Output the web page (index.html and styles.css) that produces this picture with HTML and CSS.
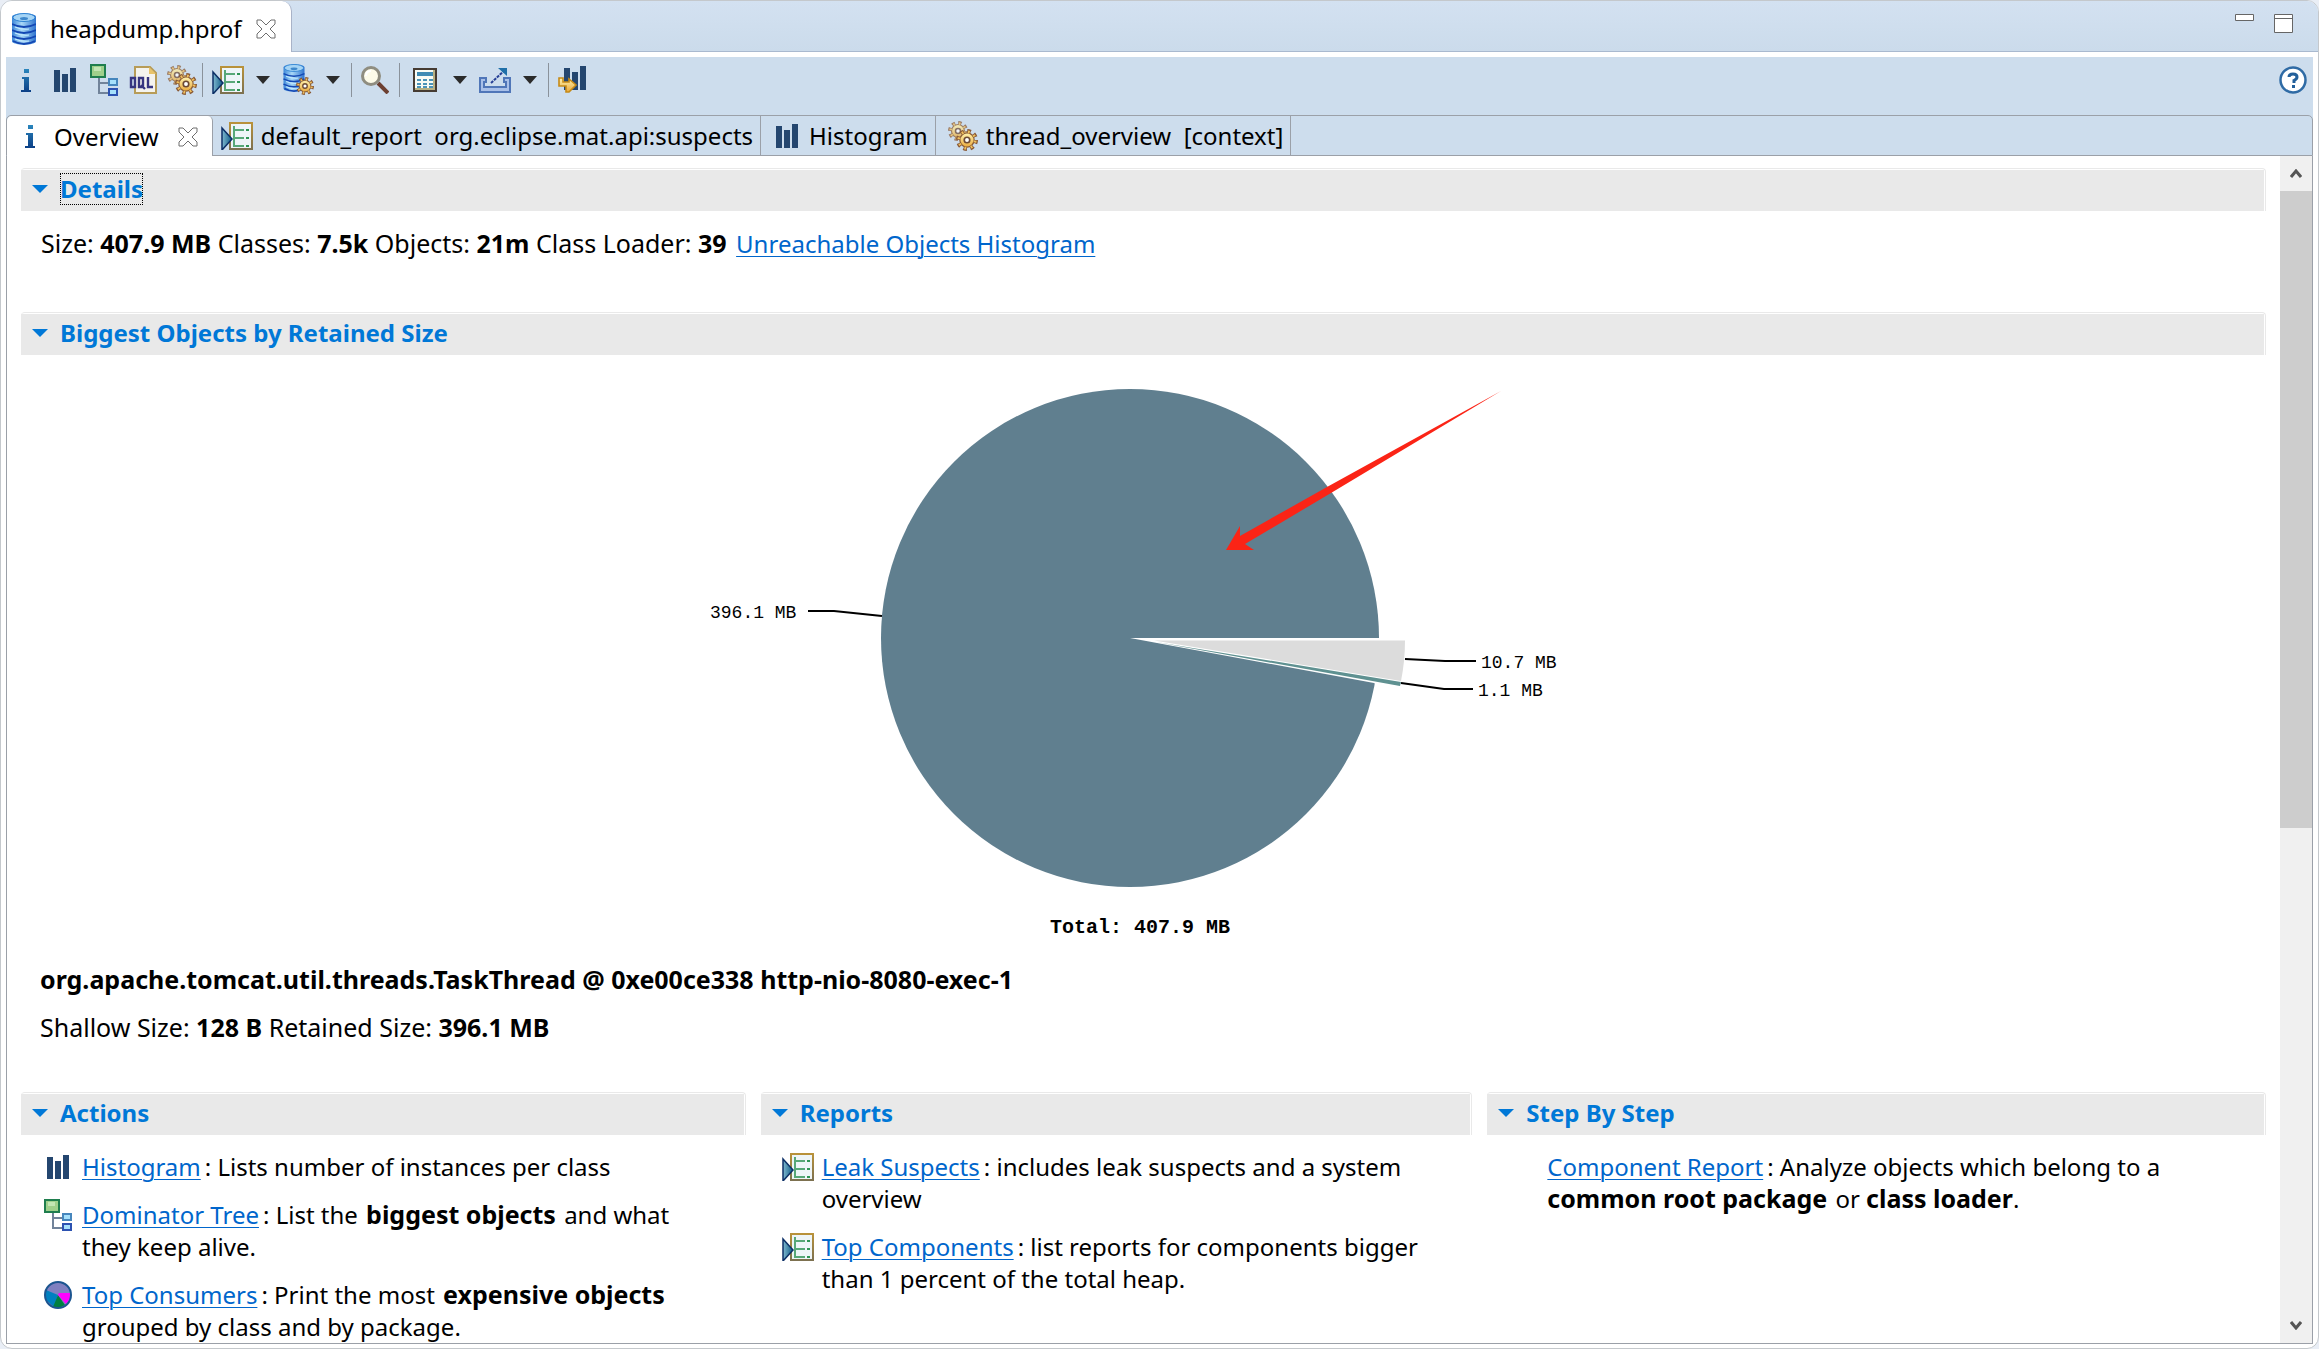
FILE: index.html
```html
<!DOCTYPE html>
<html lang="en">
<head>
<meta charset="utf-8">
<title>heapdump.hprof</title>
<link rel="stylesheet" href="styles.css">
</head>
<body>
<svg class="symbols" width="0" height="0" aria-hidden="true">
  <defs>
    <linearGradient id="cyl" x1="0" x2="1" y1="0" y2="0"><stop offset="0" stop-color="#3b86d8"/><stop offset=".4" stop-color="#a9d8f7"/><stop offset="1" stop-color="#2f74cf"/></linearGradient>
    <linearGradient id="play" x1="0" x2="1" y1="0" y2="0"><stop offset="0" stop-color="#7fb8d0"/><stop offset="1" stop-color="#0f5c86"/></linearGradient>
    <linearGradient id="gold" x1="0" x2="0" y1="0" y2="1"><stop offset="0" stop-color="#fff3b0"/><stop offset="1" stop-color="#e9a93c"/></linearGradient>
    <linearGradient id="frame" x1="0" x2="0" y1="0" y2="1"><stop offset="0" stop-color="#b9923a"/><stop offset="1" stop-color="#7d7150"/></linearGradient>
    <linearGradient id="info" x1="0" x2="0" y1="0" y2="1"><stop offset="0" stop-color="#2a86bd"/><stop offset="1" stop-color="#0b3f86"/></linearGradient>
    <symbol id="i-db" viewBox="0 0 24 32">
      <path d="M0 4C0-1 24-1 24 4V28C24 33 0 33 0 28Z" fill="url(#cyl)"/>
      <ellipse cx="12" cy="4.500" rx="11" ry="4" fill="#a5d4f5" stroke="#2f82d2"/>
      <ellipse cx="12" cy="5.500" rx="4" ry="1.500" fill="#3e88cc"/>
      <path d="M0 11q12 6 24 0M0 17q12 6 24 0M0 23q12 6 24 0M1 28q11 6 22 0" fill="none" stroke="#1448b4" stroke-width="1.800"/>
      <path d="M3 14q7 3 14 2M3 20q7 3 14 2M3 26q7 3 14 2" fill="none" stroke="#c5ecff" stroke-width="1.200"/>
    </symbol>
    <symbol id="i-info" viewBox="0 0 10 23"><path d="M3 0H8V4H3ZM1 8H8V21H10V23H0V21H3V10H1Z" fill="url(#info)"/></symbol>
    <symbol id="i-bars" viewBox="0 0 22 24"><path d="M0 2H6V24H0ZM8 6H14V24H8ZM16 0H22V24H16Z" fill="#24466f"/></symbol>
    <symbol id="i-tree" viewBox="0 0 28 32">
      <path d="M9 13V29H19M9 19H19" fill="none" stroke="#71839a" stroke-width="2"/>
      <rect x="1" y="1" width="14" height="12" fill="#9fd08b" stroke="#1f7e4e" stroke-width="2"/>
      <rect x="4" y="3" width="7" height="4" fill="#c3e6b4"/>
      <rect x="19" y="15" width="8" height="6" fill="#a6e0fb" stroke="#4686bd" stroke-width="2"/>
      <rect x="19" y="25" width="8" height="6" fill="#a6e0fb" stroke="#2c52b1" stroke-width="2"/>
    </symbol>
    <symbol id="i-oql" viewBox="0 0 28 28">
      <path d="M6 1H21L27 7V27H6Z" fill="#f4f3ee" stroke="#b79c58" stroke-width="2"/><path d="M20 1V8H27Z" fill="#e9c46a"/>
      <path d="M2 12h4v9H2ZM10 12h4v9h-4ZM12 19l4 4M19 11v10h5" fill="none" stroke="#373580" stroke-width="2.400"/>
    </symbol>
    <symbol id="i-gear" viewBox="0 0 20 20">
      <circle cx="10" cy="10" r="7.500" fill="none" stroke="#8a5a36" stroke-width="5" stroke-dasharray="3 2.890"/>
      <circle cx="10" cy="10" r="6.500" fill="url(#gold)" stroke="#8e6038" stroke-width="1.200"/>
      <circle cx="10" cy="10" r="7.500" fill="none" stroke="#efbf5c" stroke-width="2.500" stroke-dasharray="1.600 4.290" stroke-dashoffset="-.7"/>
      <circle cx="10" cy="10" r="2.500" fill="#fff" stroke="#6d4a34" stroke-width="1.500"/>
    </symbol>
    <symbol id="i-gears" viewBox="0 0 30 30">
      <use href="#i-gear" x="0" y="0" width="20" height="20" opacity=".75"/><use href="#i-gear" x="8" y="8" width="22" height="22"/>
    </symbol>
    <symbol id="i-report" viewBox="0 0 32 28">
      <rect x="9" y="1" width="22" height="26" fill="#eef5f8" stroke="url(#frame)" stroke-width="2"/>
      <path d="M13 4V24H23M13 8H23M13 16H23" fill="none" stroke="#58a878" stroke-width="2"/>
      <path d="M25 8h3M25 16h3M25 24h3" stroke="#2f9556" stroke-width="2"/>
      <path d="M1 6L11 17L1 28Z" fill="url(#play)" stroke="#0c2f66" stroke-width="1.500"/>
    </symbol>
    <symbol id="i-dbgear" viewBox="0 0 32 32"><use href="#i-db" width="24" height="28"/><use href="#i-gear" x="14" y="13" width="18" height="18"/></symbol>
    <symbol id="i-search" viewBox="0 0 28 28">
      <path d="M17 17L27 27" stroke="#6d4032" stroke-width="4"/><circle cx="10" cy="10" r="8.500" fill="#fdfbe9" stroke="#8f8d80" stroke-width="3"/><path d="M5 10q0-5 5-5" stroke="#fff" stroke-width="2" fill="none"/>
    </symbol>
    <symbol id="i-calc" viewBox="0 0 24 24">
      <rect x="1" y="1" width="22" height="22" fill="#f8fbf4" stroke="#453b32" stroke-width="2"/><path d="M20 2H22V22H2V20H20Z" fill="#b7b184"/>
      <rect x="4" y="4" width="16" height="4" fill="#3f8bb3"/>
      <path d="M4 12h4M10 12h4M16 12h4M4 16h4M10 16h4M16 16h4M4 19h4M10 19h4M16 19h4" stroke="#4b94b8" stroke-width="2"/>
    </symbol>
    <symbol id="i-export" viewBox="0 0 32 26">
      <path d="M1 11H7V15H5V20H27V15H25V11H31V25H1Z" fill="#a9c0e8" stroke="#5076b8" stroke-width="2"/>
      <path d="M12 16L26 3" stroke="#273f96" stroke-width="2" stroke-dasharray="3 1"/><path d="M19 1H28V9Z" fill="#1f6fa8"/>
    </symbol>
    <symbol id="i-compare" viewBox="0 0 28 28">
      <path d="M6 2H12V24H6ZM14 6H20V24H14ZM22 0H28V24H22Z" fill="#24466f"/>
      <path d="M1 12V20H8V26H11L18 19L11 13V16H5V12Z" fill="url(#gold)" stroke="#c68a16" stroke-width="1.600"/>
    </symbol>
    <symbol id="i-pie" viewBox="0 0 28 28">
      <circle cx="14" cy="14" r="13" fill="#8080c0"/><path d="M14 14L2 9V19L10 26Z" fill="#0080c0"/><path d="M14 14L9 26Q14 29 21 24Z" fill="#008040"/><path d="M15 12H27V16L22 23L14 14Z" fill="#ff00ff"/>
      <circle cx="14" cy="14" r="13" fill="none" stroke="#1c5590" stroke-width="2"/>
    </symbol>
    <symbol id="i-close" viewBox="0 0 20 20"><path d="M1 1H5L10 6L15 1H19V5L14 10L19 15V19H15L10 14L5 19H1V15L6 10L1 5Z" fill="#fff" stroke="#6e6e6e"/></symbol>
    <symbol id="i-help" viewBox="0 0 28 28"><circle cx="14" cy="14" r="12.500" fill="#fff" stroke="#2f6ba5" stroke-width="2.500"/><path d="M10 11Q10 8 14 8Q18 8 18 11Q18 13 15 14.500V17" fill="none" stroke="#23609b" stroke-width="3"/><path d="M13 19H16V22H13Z" fill="#23609b"/></symbol>
    <symbol id="i-down" viewBox="0 0 14 8"><path d="M0 0H14L7 8Z" fill="#2b2b2b"/></symbol>
    <symbol id="i-twisty" viewBox="0 0 16 8"><path d="M0 0H16L8 8Z" fill="#0078d7"/></symbol>
  </defs>
</svg>

<div class="window">
  <header class="editor-bar">
    <div class="editor-tab"><svg width="24" height="32"><use href="#i-db"/></svg><span>heapdump.hprof</span><button class="icon-button" aria-label="Close heapdump.hprof"><svg width="20" height="20"><use href="#i-close"/></svg></button></div>
    <div class="window-controls">
      <button class="icon-button" aria-label="Minimize"><svg width="19" height="19"><path d="M.5 .5H18.500V6.500H.5Z" fill="#fff" stroke="#666"/></svg></button>
      <button class="icon-button" aria-label="Maximize"><svg width="19" height="19"><path d="M.5 .5H18.500V18.500H.5ZM.5 4.500H18.500" fill="#fff" stroke="#666"/></svg></button>
    </div>
  </header>

  <div class="editor">
    <div class="toolbar" role="toolbar">
      <button class="icon-button tool" aria-label="Overview"><svg width="10" height="23"><use href="#i-info"/></svg></button>
      <button class="icon-button tool" aria-label="Histogram"><svg width="22" height="24"><use href="#i-bars"/></svg></button>
      <button class="icon-button tool" aria-label="Dominator tree"><svg width="28" height="32"><use href="#i-tree"/></svg></button>
      <button class="icon-button tool" aria-label="Query editor"><svg width="28" height="28"><use href="#i-oql"/></svg></button>
      <button class="icon-button tool" aria-label="Threads"><svg width="30" height="30"><use href="#i-gears"/></svg></button>
      <span class="separator"></span>
      <button class="icon-button menu-tool" aria-label="Reports"><span class="icon"><svg width="32" height="28"><use href="#i-report"/></svg></span><svg width="14" height="8"><use href="#i-down"/></svg></button>
      <button class="icon-button menu-tool last" aria-label="Queries"><span class="icon"><svg width="32" height="32"><use href="#i-dbgear"/></svg></span><svg width="14" height="8"><use href="#i-down"/></svg></button>
      <span class="separator"></span>
      <button class="icon-button wide tool" aria-label="Find"><svg width="28" height="28"><use href="#i-search"/></svg></button>
      <span class="separator"></span>
      <button class="icon-button menu-tool" aria-label="Calculate"><span class="icon"><svg width="24" height="24"><use href="#i-calc"/></svg></span><svg width="14" height="8"><use href="#i-down"/></svg></button>
      <button class="icon-button menu-tool last" aria-label="Export"><span class="icon"><svg width="32" height="26"><use href="#i-export"/></svg></span><svg width="14" height="8"><use href="#i-down"/></svg></button>
      <span class="separator"></span>
      <button class="icon-button wide tool" aria-label="Compare"><svg width="28" height="28"><use href="#i-compare"/></svg></button>
      <button class="icon-button help" aria-label="Help"><svg width="28" height="28"><use href="#i-help"/></svg></button>
    </div>

    <nav class="tabs">
      <div class="tab active"><svg width="10" height="23"><use href="#i-info"/></svg><a href="#overview">Overview</a><button class="icon-button" aria-label="Close Overview"><svg width="20" height="20"><use href="#i-close"/></svg></button></div>
      <div class="tab"><svg width="32" height="28"><use href="#i-report"/></svg><a href="#report">default_report&nbsp; org.eclipse.mat.api:suspects</a></div>
      <div class="tab bars-tab"><svg width="22" height="24"><use href="#i-bars"/></svg><a href="#histogram">Histogram</a></div>
      <div class="tab gears-tab"><svg width="30" height="30"><use href="#i-gears"/></svg><a href="#threads">thread_overview&nbsp; [context]</a></div>
    </nav>

    <div class="view">
      <main class="page" id="overview">
        <section>
          <div class="section-head"><h2><button class="toggle"><svg width="16" height="8"><use href="#i-twisty"/></svg><span class="focused">Details</span></button></h2></div>
          <p class="summary">Size: <b>407.9 MB</b> Classes: <b>7.5k</b> Objects: <b>21m</b> Class Loader: <b>39</b> <a href="#unreachable">Unreachable Objects Histogram</a></p>
        </section>

        <section>
          <div class="section-head"><h2><button class="toggle"><svg width="16" height="8"><use href="#i-twisty"/></svg><span>Biggest Objects by Retained Size</span></button></h2></div>
          <div class="chart">
            <svg width="870" height="560" viewBox="695 380 870 560" role="img" aria-label="Retained size pie chart">
              <circle cx="1130" cy="638" r="249" fill="#607f8f"/>
              <path d="M1130 638H1382V687L1374 683Z" fill="#fff"/>
              <path d="M1154 640.500H1405Q1405 661 1401 681Z" fill="#dcdcdc"/>
              <path d="M1156 642L1401 682L1400 686Z" fill="#5f9191"/>
              <path d="M808 611H834L882 616M1405 659L1445 661H1476M1401 683L1444 689H1473" fill="none" stroke="#000" stroke-width="2"/>
              <path d="M1501 391L1327 487L1240 536V526L1226 550H1254L1245 544L1331 493Z" fill="#fb2416"/>
              <g class="chart-labels">
                <text x="710" y="618">396.1 MB</text>
                <text x="1481" y="668">10.7 MB</text>
                <text x="1478" y="696">1.1 MB</text>
                <text class="total" x="1050" y="933">Total: 407.9 MB</text>
              </g>
            </svg>
          </div>
          <p class="object-name"><b>org.apache.tomcat.util.threads.TaskThread @ 0xe00ce338 http-nio-8080-exec-1</b></p>
          <p class="object-size">Shallow Size: <b>128 B</b> Retained Size: <b>396.1 MB</b></p>
        </section>

        <div class="columns">
          <section>
            <div class="section-head"><h2><button class="toggle"><svg width="16" height="8"><use href="#i-twisty"/></svg><span>Actions</span></button></h2></div>
            <ul>
              <li><span class="icon"><svg width="22" height="24"><use href="#i-bars"/></svg></span><p><a href="#histogram">Histogram</a>: Lists number of instances per class</p></li>
              <li><span class="icon"><svg width="28" height="32"><use href="#i-tree"/></svg></span><p><a href="#tree">Dominator Tree</a>: List the <b>biggest objects</b> and what they keep alive.</p></li>
              <li><span class="icon"><svg width="28" height="28"><use href="#i-pie"/></svg></span><p><a href="#consumers">Top Consumers</a>: Print the most <b>expensive objects</b> grouped by class and by package.</p></li>
            </ul>
          </section>
          <section>
            <div class="section-head"><h2><button class="toggle"><svg width="16" height="8"><use href="#i-twisty"/></svg><span>Reports</span></button></h2></div>
            <ul>
              <li><span class="icon"><svg width="32" height="28"><use href="#i-report"/></svg></span><p><a href="#leaks">Leak Suspects</a>: includes leak suspects and a system overview</p></li>
              <li><span class="icon"><svg width="32" height="28"><use href="#i-report"/></svg></span><p><a href="#components">Top Components</a>: list reports for components bigger than 1 percent of the total heap.</p></li>
            </ul>
          </section>
          <section>
            <div class="section-head"><h2><button class="toggle"><svg width="16" height="8"><use href="#i-twisty"/></svg><span>Step By Step</span></button></h2></div>
            <ul class="plain">
              <li><p><a href="#component-report">Component Report</a>: Analyze objects which belong to a <b>common root package</b> or <b>class loader</b>.</p></li>
            </ul>
          </section>
        </div>
      </main>
      <div class="scrollbar">
        <button class="icon-button arrow" aria-label="Scroll up"><svg width="12" height="9"><path d="M1 8L6 2L11 8" fill="none" stroke="#555" stroke-width="3"/></svg></button>
        <div class="track"><div class="thumb"></div></div>
        <button class="icon-button arrow" aria-label="Scroll down"><svg width="12" height="9"><path d="M1 1L6 7L11 1" fill="none" stroke="#555" stroke-width="3"/></svg></button>
      </div>
    </div>
  </div>
</div>
</body>
</html>
```
FILE: styles.css
```css
* { box-sizing: border-box; }
body { margin: 0; background: #e9eef6; color: #000; font: 24px/32px "Noto Sans", "Open Sans", sans-serif; }
p, h2, ul { margin: 0; padding: 0; }
svg { display: block; flex: none; }
a { color: #0066cc; text-decoration-thickness: 1px; text-underline-offset: 3px; }
b { font-size: 25px; line-height: 24px; }
.symbols { position: absolute; }
.icon-button { display: flex; flex: none; align-items: center; justify-content: center; padding: 0; border: 0; background: none; }
.icon { display: flex; flex: none; align-items: center; justify-content: center; width: 32px; height: 32px; }

.window { display: flex; flex-direction: column; height: 100vh; border: 1px solid #c4c8cc; border-radius: 12px; background: #fff; overflow: hidden; }
.editor-bar { display: flex; justify-content: space-between; height: 51px; flex: none; background: linear-gradient(#d3e1f1, #cbdbeb); border-bottom: 1px solid #a9b9cf; }
.editor-tab { display: flex; align-items: center; gap: 14px; height: 51px; padding: 4px 15px 0 11px; background: #fff; border-right: 1px solid #a9b3c8; border-radius: 10px 10px 0 0; }
.window-controls { display: flex; align-items: flex-start; gap: 20px; padding: 13px 25px 0 0; }

.editor { display: flex; flex-direction: column; flex: 1; min-height: 0; margin: 5px 5px 4px 5px; background: #cddded; }
.toolbar { display: flex; align-items: center; height: 46px; margin-bottom: 12px; padding: 0 6px 0 0; flex: none; }
.tool { width: 39px; height: 40px; }
.wide { width: 46px; }
.menu-tool { justify-content: flex-start; gap: 12px; width: 70px; height: 40px; padding-left: 9px; }
.last { margin-right: 7px; }
.separator { width: 1px; height: 34px; margin-left: 1px; background: #8a929b; }
.help { margin-left: auto; }

.tabs { display: flex; flex: none; height: 41px; border: 1px solid #9ba0a8; border-radius: 5px 5px 0 0; }
.tab { display: flex; align-items: center; gap: 8px; height: 39px; padding: 0 7px 0 8px; border-right: 1px solid #9ba0a8; }
.tab a { color: #000; text-decoration: none; white-space: nowrap; }
.tab.active { gap: 19px; height: 41px; padding: 0 14px 0 18px; background: #fff; border-radius: 5px 5px 0 0; }
.bars-tab { gap: 11px; padding-left: 15px; }
.gears-tab { padding-left: 12px; }

.view { display: flex; flex: 1; min-height: 0; background: #fff; border: 1px solid #9ba0a8; border-top: 0; }
.page { flex: 1; min-width: 0; overflow: hidden; padding: 12px 14px 0 14px; }
.section-head { padding: 1px 1px 0 0; border: 1px solid #e9e9e9; border-width: 1px 1px 0 0; border-radius: 4px 4px 0 0; }
h2 { height: 41px; background: #e9e9e9; font-size: 24px; line-height: 32px; }
.toggle { display: flex; align-items: center; gap: 12px; height: 38px; padding: 0 0 0 11px; border: 0; background: none; color: #0078d7; font: inherit; }
.focused { outline: 1px dotted #000; outline-offset: -1px; }
.summary, .object-name, .object-size { font-size: 25px; }
.summary { padding: 16px 20px 53px; }
.summary a { margin-left: 3px; font-size: 24px; line-height: 24px; }
.chart { display: flex; justify-content: center; padding: 25px 28px 0 0; }
.chart-labels { font: 18px "Liberation Mono", monospace; }
.total { font-size: 20px; font-weight: bold; }
.object-name { padding: 23px 20px 0 19px; }
.object-size { padding: 16px 20px 49px 19px; }

.columns { display: grid; grid-template-columns: 725fr 712fr 779fr; gap: 15px; }
ul { display: flex; flex-direction: column; gap: 16px; padding: 16px 36px 0 21px; list-style: none; }
li { display: flex; gap: 8px; }
li a { margin-right: 4px; }
li b { margin-left: 2px; }
li b:first-of-type { margin-right: 2px; }
.plain { padding-left: 60px; }
.plain b { margin-left: 0; }

.scrollbar { display: flex; flex-direction: column; width: 32px; background: #f0f0f0; }
.arrow { height: 35px; }
.track { flex: 1; }
.thumb { height: 57%; background: #cdcdcd; }
```
